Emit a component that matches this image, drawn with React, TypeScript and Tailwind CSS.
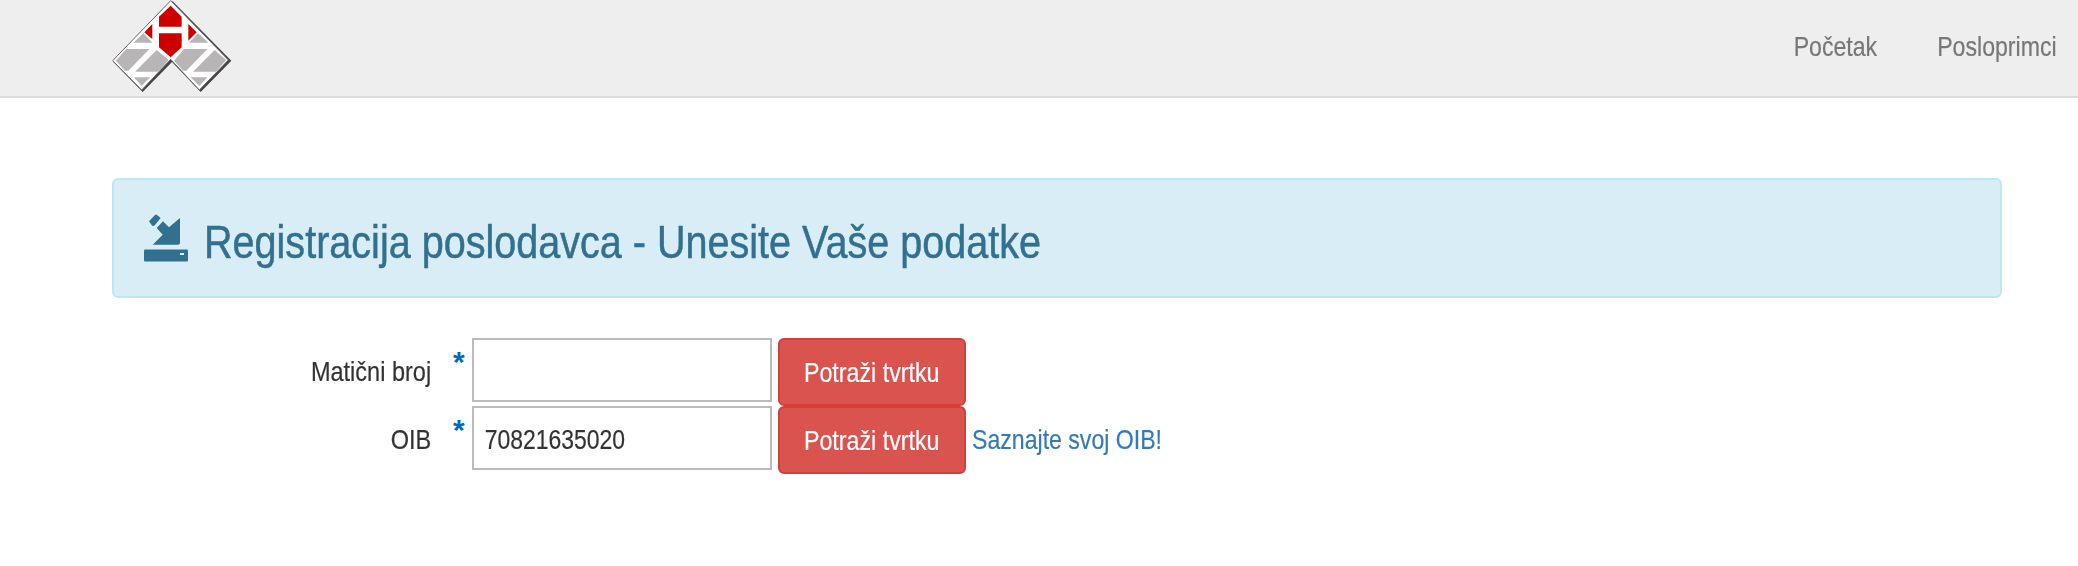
const sans = 'font-["Liberation_Sans",sans-serif]'

function Logo() {
    return (
        <svg viewBox="60 0 375 291" className="w-[125px] h-[97px] blur-[0.5px]">
            <path d="M248 4 L424 182 L332 276 L246 186 L158 276 L70 186 Z" fill="#444" />
            <path d="M242 2 L415 180 L328 270 L242 178 L155 270 L68 182 Z" fill="#fff" stroke="#666" strokeWidth="3" />
            <path d="M207 50 L242 17 L275 50 L275 80 L207 80 Z" fill="#cc0000" />
            <path d="M207 100 L275 100 L275 142 L242 172 L207 142 Z" fill="#cc0000" />
            <path d="M187 72 L187 117 L163 97 Z" fill="#cc0000" />
            <path d="M295 72 L320 97 L295 122 Z" fill="#cc0000" />
            <g fill="#b7b5b5">
                <path d="M130 128 L160 100 L187 128 Z" />
                <path d="M297 128 L325 100 L355 128 Z" />
                <path d="M78 182 L108 147 L178 147 L115 212 L105 212 Z" />
                <path d="M200 150 L236 180 L205 215 L135 215 Z" />
                <path d="M132 232 L180 232 L155 258 Z" />
                <path d="M252 182 L282 147 L352 147 L289 212 L279 212 Z" />
                <path d="M374 150 L408 180 L378 215 L309 215 Z" />
                <path d="M302 232 L352 232 L328 258 Z" />
            </g>
        </svg>
    )
}

function DownloadIcon() {
    return (
        <svg viewBox="0 0 44 48" className="w-[44px] h-[48px] text-[#31708f]" fill="currentColor">
            <rect x="0" y="35.5" width="44" height="12" rx="1" />
            <rect x="36" y="39" width="4" height="2" fill="#d9edf7" />
            <path d="M5 7.3 L11 1 Q12 0 13 1 L16.7 4 L10.5 11.5 Q9.3 12.3 8 11.5 Z" />
            <path d="M12.7 14 L19 7.3 L25 13.3 L36 4 L36 29 Q36 30.7 34 30.7 L8.7 30.7 L18.7 20.7 Z" />
        </svg>
    )
}

function FormRow({ label, value, link }: { label: string; value?: string; link?: boolean }) {
    return (
        <div className="flex items-start h-[68px]">
            <label className="w-[319px] h-[68px] flex items-center justify-end text-[28px] text-[#333]">
                <span className="inline-block whitespace-nowrap origin-right scale-x-[0.84] [-webkit-text-stroke:0.2px]">{label}</span>
            </label>
            <span className="w-[41px] pl-[22px] pt-[8px] text-[30px] leading-[32px] font-bold text-[#0069c0]">*</span>
            <div className="w-[300px] h-[64px] border-2 border-[#bbb] overflow-hidden">
                <input
                    readOnly
                    value={value ?? ''}
                    className="w-[350px] h-[60px] pt-[3px] origin-left scale-x-[0.82] px-[13px] text-[28px] text-[#333] outline-none bg-transparent [-webkit-text-stroke:0.2px]"
                />
            </div>
            <button className="ml-[6px] w-[188px] h-[68px] pt-[2px] rounded-[6px] border-2 border-[#d43f3a] bg-[#d9534f] text-[28px] text-white">
                <span className="inline-block whitespace-nowrap scale-x-[0.83] [-webkit-text-stroke:0.2px]">Potraži tvrtku</span>
            </button>
            {link && (
                <a className="ml-[6px] h-[68px] flex items-center text-[28px] text-[#337ab7]">
                    <span className="inline-block whitespace-nowrap origin-left scale-x-[0.825] [-webkit-text-stroke:0.2px]">Saznajte svoj OIB!</span>
                </a>
            )}
        </div>
    )
}

export default function App() {
    return (
        <div className={`${sans} w-[2078px] h-[566px] bg-white overflow-hidden`}>
            <header className="h-[98px] bg-[#eee] border-b-2 border-[#ddd] flex justify-between">
                <div className="pl-[110px]">
                    <Logo />
                </div>
                <nav className="flex items-center pr-[22px] pb-[2px] text-[28px] text-[#777]">
                    <a className="w-[101px] whitespace-nowrap origin-right scale-x-[0.825] [-webkit-text-stroke:0.2px]">Početak</a>
                    <a className="ml-[35px] w-[144px] whitespace-nowrap origin-right scale-x-[0.825] [-webkit-text-stroke:0.2px]">Posloprimci</a>
                </nav>
            </header>
            <main className="px-[112px] pt-[80px]">
                <div className="w-[1890px] h-[120px] rounded-[6px] border-2 border-[#bce8f1] bg-[#d9edf7] flex items-center pl-[30px] text-[#31708f]">
                    <DownloadIcon />
                    <h2 className="ml-[16px] pt-[8px] text-[46px] whitespace-nowrap origin-left scale-x-[0.86] [-webkit-text-stroke:0.5px]">
                        Registracija poslodavca - Unesite Vaše podatke
                    </h2>
                </div>
                <form className="mt-[40px]">
                    <FormRow label="Matični broj" />
                    <FormRow label="OIB" value="70821635020" link />
                </form>
            </main>
        </div>
    )
}
